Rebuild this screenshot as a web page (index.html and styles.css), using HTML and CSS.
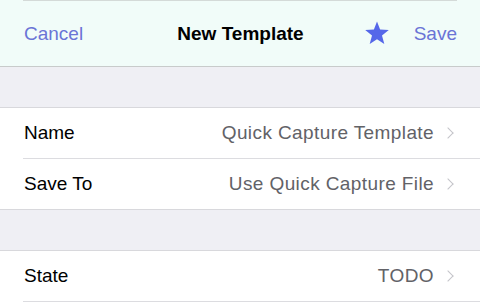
FILE: index.html
```html
<!DOCTYPE html>
<html lang="en">
<head>
  <meta charset="UTF-8">
  <meta name="viewport" content="width=device-width, initial-scale=1.0">
  <title>New Template</title>
  <link rel="stylesheet" href="styles.css">
</head>
<body>
  <div class="nav-bar">
    <div class="nav-top-line"></div>
    <div class="nav-content">
      <div class="nav-left">Cancel</div>
      <div class="nav-title">New Template</div>
      <div class="nav-right">
        <svg class="star" width="26" height="24" viewBox="0 0 26 24">
          <path d="M13 0.5 L16.1 8.6 L24.8 9.1 L18 14.6 L20.3 23 L13 18.3 L5.7 23 L8 14.6 L1.2 9.1 L9.9 8.6 Z" fill="#5567e9"/>
        </svg>
        <span class="nav-save">Save</span>
      </div>
    </div>
  </div>

  <div class="section-gap"></div>
  <div class="group">
    <div class="row">
      <span class="row-label">Name</span>
      <span class="row-value">Quick Capture Template</span>
      <span class="chevron"></span>
    </div>
    <div class="row">
      <span class="row-label">Save To</span>
      <span class="row-value">Use Quick Capture File</span>
      <span class="chevron"></span>
    </div>
  </div>

  <div class="section-gap"></div>
  <div class="group">
    <div class="row">
      <span class="row-label">State</span>
      <span class="row-value">TODO</span>
      <span class="chevron"></span>
    </div>
    <div class="row"></div>
  </div>
</body>
</html>
```

FILE: styles.css
```css
body {
  margin: 0;
  width: 480px;
  height: 304px;
  overflow: hidden;
  background-color: #efeff4;
  font-family: 'Liberation Sans', Arial, sans-serif;
  font-size: 19px;
  color: #000;
}

.nav-bar {
  background-color: #f1fcf9;
  border-bottom: 1px solid #c8cbcb;
  height: 66px;
}

.nav-top-line {
  margin: 0 23px;
  border-top: 1px solid #d4dad8;
}

.nav-content {
  display: grid;
  grid-template-columns: 1fr auto 1fr;
  align-items: center;
  height: 65px;
  padding: 0 23px 0 24px;
  box-sizing: border-box;
  margin-top: -1px;
}

.nav-left {
  color: #6a74d6;
  padding-top: 2px;
}

.nav-title {
  font-weight: bold;
  padding-top: 2px;
}

.nav-right {
  display: flex;
  justify-content: flex-end;
  align-items: center;
}

.star {
  margin-right: 24px;
}

.nav-save {
  color: #6a74d6;
  padding-top: 2px;
}

.section-gap {
  height: 40px;
}

.group {
  background-color: #fff;
  border-top: 1px solid #d8d8dc;
  border-bottom: 1px solid #d8d8dc;
}

.row {
  display: flex;
  align-items: center;
  height: 50px;
  margin-left: 23px;
  padding-left: 1px;
  padding-right: 28px;
  border-bottom: 1px solid #dcdce0;
}

.row:last-child {
  border-bottom: none;
}

.row-label {
  flex: 1;
}

.row-value {
  color: #626267;
  letter-spacing: 0.4px;
}

.chevron {
  width: 7px;
  height: 7px;
  border-top: 1.5px solid #c4c4c9;
  border-right: 1.5px solid #c4c4c9;
  transform: rotate(45deg);
  margin-left: 10px;
}
```
